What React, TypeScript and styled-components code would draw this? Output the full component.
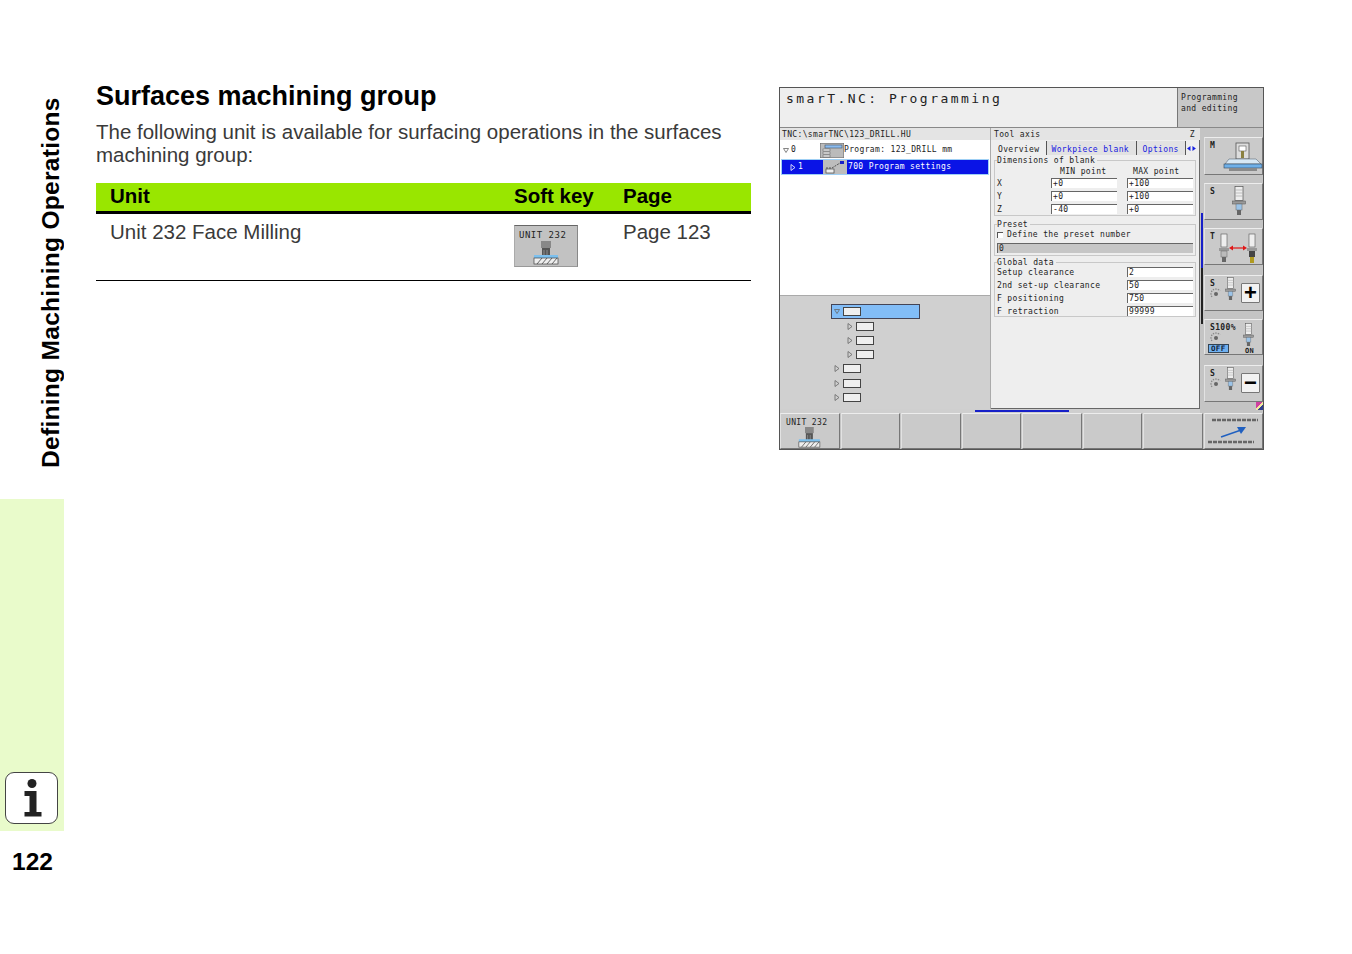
import React from "react";
import styled, { createGlobalStyle } from "styled-components";

const GlobalStyle = createGlobalStyle`
  html, body {
    margin: 0;
    padding: 0;
    background: #fff;
  }
`;

const Page = styled.div`
  display: flex;
  width: 1352px;
  height: 954px;
  overflow: hidden;
  background: #fff;
  font-family: "Liberation Sans", Arial, sans-serif;
  color: #000;
`;

const Side = styled.aside`
  display: flex;
  flex-direction: column;
  width: 64px;
  flex: none;
`;

const SideTitleWrap = styled.div`
  display: flex;
  justify-content: flex-end;
  height: 499px;
  box-sizing: border-box;
  padding: 92px 0 0;
`;

const SideTitle = styled.div`
  writing-mode: vertical-rl;
  transform: rotate(180deg);
  font-size: 24.5px;
  font-weight: 700;
  line-height: 28px;
  height: 376px;
  letter-spacing: 0.3px;
  text-align: left;
  white-space: nowrap;
  margin-right: -1px;
`;

const SideTab = styled.div`
  display: flex;
  align-items: flex-end;
  height: 332px;
  box-sizing: border-box;
  padding: 0 0 7px 5px;
  background: #e9fbcb;
`;

const InfoBadge = styled.div`
  display: flex;
  align-items: center;
  justify-content: center;
  width: 53px;
  height: 52px;
  box-sizing: border-box;
  border: 1px solid #444;
  border-radius: 9px;
  background: #fff;
`;

const PageNumber = styled.div`
  padding: 17px 0 0 12px;
  font-size: 24.5px;
  font-weight: 700;
  line-height: 28px;
`;

const Content = styled.main`
  width: 655px;
  flex: none;
  margin-left: 32px;
  padding-top: 79px;
`;

const Heading = styled.h1`
  margin: 0;
  font-size: 27px;
  font-weight: 700;
  line-height: 35px;
  white-space: nowrap;
`;

const Lead = styled.p`
  margin: 6px 0 0;
  width: 640px;
  font-size: 20.5px;
  line-height: 23px;
  color: #3a3a3a;
`;

const Table = styled.div`
  margin-top: 17px;
`;

const TableRow = styled.div<{ $head?: boolean }>`
  display: grid;
  grid-template-columns: 418px 109px 1fr;
  box-sizing: border-box;
  height: ${(p) => (p.$head ? "31px" : "67px")};
  padding: ${(p) => (p.$head ? "0" : "6px 0 0")};
  background: ${(p) => (p.$head ? "#99e600" : "transparent")};
  border-bottom: ${(p) => (p.$head ? "3px solid #000" : "1px solid #000")};
  font-size: 20.5px;
  font-weight: ${(p) => (p.$head ? 700 : 400)};
  line-height: ${(p) => (p.$head ? "26px" : "24px")};
  color: ${(p) => (p.$head ? "#000" : "#3a3a3a")};
`;

const Cell = styled.div<{ $first?: boolean }>`
  padding-left: ${(p) => (p.$first ? "14px" : "0")};
  white-space: nowrap;
`;

const KeyThumb = styled.div`
  display: flex;
  flex-direction: column;
  width: 64px;
  height: 42px;
  margin-top: 5px;
  box-sizing: border-box;
  padding: 5px 0 0 4px;
  background: #c2c2c2;
  border-top: 1px solid #666;
  border-right: 1px solid #888;
  border-bottom: 1px solid #999;
  border-left: 1px solid #aaa;
  font-family: "DejaVu Sans Mono", monospace;
  font-size: 9px;
  line-height: 9px;
  letter-spacing: 0.5px;
  color: #222;
  white-space: pre;
`;

const ThumbArt = styled.div`
  display: flex;
  justify-content: center;
  margin: 1px 4px 0 0;
`;

/* screenshot of the control */

const Screen = styled.section`
  display: grid;
  grid-template-columns: 211px 209px 63px;
  grid-template-rows: 40px 12px 269px 4px 1fr;
  position: relative;
  width: 485px;
  height: 363px;
  margin: 87px 0 0 28px;
  box-sizing: border-box;
  flex: none;
  border: 1px solid #555;
  background: #c4c4c4;
  font-family: "DejaVu Sans Mono", monospace;
  font-size: 8px;
  line-height: 10px;
  letter-spacing: 0.35px;
  color: #222;
  white-space: pre;
`;

const Header = styled.header`
  grid-column: 1 / -1;
  display: flex;
  border-bottom: 1px solid #888;
`;

const TitleBar = styled.div`
  width: 398px;
  flex: none;
  padding: 3px 0 0 6px;
  background: #eeeeee;
  border-right: 1px solid #777;
  box-sizing: border-box;
  font-size: 13px;
  line-height: 15px;
  letter-spacing: 2.47px;
`;

const ModeBox = styled.div`
  flex: 1;
  padding: 4px 0 0 3px;
  background: #c8c8c8;
  line-height: 11px;
`;

const PathBar = styled.div`
  padding: 2px 0 0 2px;
  background: #e4e4e4;
  border-right: 1px solid #aaa;
  box-sizing: border-box;
`;

const AxisBar = styled.div`
  display: flex;
  justify-content: space-between;
  padding: 2px 5px 0 3px;
  background: #e4e4e4;
  box-sizing: border-box;
`;

const RightRail = styled.div`
  grid-column: 3;
  grid-row: 2 / 5;
  display: flex;
  flex-direction: column;
  padding: 9px 0 0 4px;
`;

const LeftPane = styled.div`
  display: flex;
  flex-direction: column;
  border-right: 1px solid #aaa;
  box-sizing: border-box;
`;

const ProgramTree = styled.div`
  height: 156px;
  flex: none;
  padding-top: 2px;
  box-sizing: border-box;
  background: #fff;
  border-bottom: 1px solid #aaa;
`;

const ProgramRow = styled.div<{ $active?: boolean }>`
  display: grid;
  grid-template-columns: ${(p) => (p.$active ? "39px 25px 1fr" : "37px 24px 1fr")};
  align-items: center;
  height: 16px;
  margin: ${(p) => (p.$active ? "1px 1px 0 1px" : "0 0 0 1px")};
  padding-left: 2px;
  box-sizing: border-box;
  background: ${(p) => (p.$active ? "#0a14e6" : "transparent")};
  border: ${(p) => (p.$active ? "1px solid #9fd0f5" : "none")};
  color: ${(p) => (p.$active ? "#fff" : "#222")};
`;

const RowMarker = styled.span<{ $indent?: number }>`
  display: flex;
  align-items: center;
  gap: 2px;
  padding-left: ${(p) => p.$indent ?? 0}px;
`;

const RowIcon = styled.svg`
  display: block;
  flex: none;
`;

const UnitTree = styled.div`
  flex: 1;
  display: flex;
  flex-direction: column;
  padding: 8px 0 0 51px;
  background: #d0d0d0;
`;

const UnitRow = styled.div<{ $open?: boolean; $nested?: boolean }>`
  display: flex;
  align-items: center;
  gap: 3px;
  box-sizing: border-box;
  width: 89px;
  height: 15px;
  margin-bottom: ${(p) => (p.$open ? "0" : "-0.85px")};
  padding-left: ${(p) => (p.$nested ? "15px" : "2px")};
  background: ${(p) => (p.$open ? "#82bdf7" : "transparent")};
  border: ${(p) => (p.$open ? "1px solid #445" : "1px solid transparent")};
`;

const UnitBox = styled.span`
  width: 18px;
  height: 9px;
  box-sizing: border-box;
  background: #efefef;
  border: 1px solid #444;
`;

const FormPane = styled.div`
  padding: 1px 3px 0;
  background: #eeeeee;
  border-right: 1px solid #666;
  border-bottom: 1px solid #666;
  box-sizing: border-box;
`;

const Tabs = styled.div`
  display: flex;
  align-items: stretch;
  height: 14px;
  padding-left: 2px;
`;

const Tab = styled.div<{ $active?: boolean; $width: number; $pad: number }>`
  width: ${(p) => p.$width}px;
  box-sizing: border-box;
  padding: 4px 0 0 ${(p) => p.$pad}px;
  background: ${(p) => (p.$active ? "#eeeeee" : "#e2e2e2")};
  border-right: 1px solid #555;
  color: ${(p) => (p.$active ? "#222" : "#1720e0")};
`;

const TabArrows = styled.svg`
  margin: 5px 0 0 1px;
`;

const Group = styled.fieldset<{ $height: number; $gap: number }>`
  height: ${(p) => p.$height}px;
  margin: ${(p) => p.$gap}px 0 0;
  padding: 0 2px;
  box-sizing: border-box;
  border: 1px solid #c8c8c8;
  min-width: 0;
`;

const Legend = styled.legend`
  padding: 0 2px 0 0;
  line-height: 9px;
`;

const PointHead = styled.div`
  display: grid;
  grid-template-columns: 63px 73px 1fr;
  height: 13px;
  line-height: 13px;
`;

const FieldRow = styled.div<{ $wide?: boolean }>`
  display: grid;
  grid-template-columns: ${(p) => (p.$wide ? "130px 66px" : "44px 66px 66px")};
  column-gap: ${(p) => (p.$wide ? "0" : "10px")};
  align-items: start;
  height: 13px;
`;

const FieldLabel = styled.span`
  padding-top: 1px;
`;

const Field = styled.div`
  height: 10px;
  padding-left: 1px;
  box-sizing: border-box;
  background: #fff;
  border-top: 1px solid #666;
  border-left: 1px solid #666;
  line-height: 9px;
`;

const CheckRow = styled.div`
  display: flex;
  align-items: center;
  gap: 4px;
  height: 11px;
`;

const CheckBox = styled.span`
  width: 6px;
  height: 6px;
  box-sizing: border-box;
  background: #fff;
  border-top: 1px solid #555;
  border-left: 1px solid #555;
`;

const GreyField = styled.div`
  height: 10px;
  margin-top: 3px;
  padding-left: 1px;
  box-sizing: border-box;
  background: #c6c6c6;
  border-top: 1px solid #666;
  border-left: 1px solid #666;
  line-height: 9px;
`;

const Divider = styled.div`
  grid-column: 1 / 3;
  background: #cfcfcf;
`;

const BottomKeys = styled.div`
  grid-column: 1 / -1;
  display: grid;
  grid-template-columns: repeat(8, 1fr);
  column-gap: 1px;
`;

const SoftKey = styled.div`
  display: flex;
  box-sizing: border-box;
  background: #cacaca;
  border-top: 1px solid #ededed;
  border-left: 1px solid #e2e2e2;
  border-right: 1px solid #777;
  border-bottom: 1px solid #777;
`;

const RailKey = styled(SoftKey)<{ $height: number; $below: number }>`
  width: 59px;
  height: ${(p) => p.$height}px;
  flex: none;
  margin-bottom: ${(p) => p.$below}px;
  padding: 1px 2px 0 5px;
`;

const KeyColumn = styled.div<{ $width: number }>`
  display: flex;
  flex-direction: column;
  align-items: flex-start;
  flex: none;
  width: ${(p) => p.$width}px;
  padding-top: 2px;
  box-sizing: border-box;
`;

const KeyArt = styled.div<{ $top: number }>`
  flex: none;
  padding-top: ${(p) => p.$top}px;
  line-height: 0;
`;

const KeyLetter = styled.span`
  font-weight: 700;
  font-size: 8px;
  line-height: 9px;
`;

const BottomKeyLabel = styled.div`
  display: flex;
  flex-direction: column;
  align-items: center;
  width: 100%;
  padding: 4px 0 0;
  line-height: 9px;
`;

const BottomKeyText = styled.span`
  align-self: flex-start;
  padding-left: 5px;
`;

const CenteredArt = styled.div`
  display: flex;
  align-items: center;
  justify-content: center;
  width: 100%;
`;

const SignBox = styled.span`
  display: flex;
  align-items: center;
  justify-content: center;
  width: 19px;
  height: 20px;
  margin: 6px 0 0 auto;
  box-sizing: border-box;
  background: #f2f2f2;
  border: 1px solid #777;
  border-radius: 1px;
  font-family: "Liberation Sans", sans-serif;
  font-size: 22px;
  font-weight: 700;
  color: #000;
`;

const OffChip = styled.span`
  margin: 1px 0 0 -2px;
  padding: 0 2px;
  background: #6fb0f0;
  border: 1px solid #345;
  font-size: 7.5px;
  line-height: 7px;
  font-weight: 700;
  color: #123;
`;

const OnLabel = styled.span`
  margin: 1px 0 0 2px;
  font-size: 7px;
  line-height: 7px;
  font-weight: 700;
`;

const ScrollMark = styled.div`
  position: absolute;
  left: 421px;
  top: 125px;
  width: 2px;
  height: 111px;
  background: linear-gradient(#1720c8 0 50%, #222 50%);
`;

const ProgressMark = styled.div`
  position: absolute;
  left: 195px;
  top: 322px;
  width: 94px;
  height: 2px;
  background: #1720c8;
`;

const CornerMark = styled.div`
  position: absolute;
  right: 0;
  top: 314px;
  width: 7px;
  height: 8px;
  background: linear-gradient(135deg, #d040a0 0 45%, #f2e8a0 45% 60%, #304090 60%);
`;

const Triangle = ({ down, color = "#666" }: { down?: boolean; color?: string }) => (
  <RowIcon width="6" height="7" viewBox="0 0 6 7">
    {down ? (
      <path d="M0.5 1.5h5L3 5.5z" fill="none" stroke={color} strokeWidth="0.8" />
    ) : (
      <path d="M1 0.5v6L5 3.5z" fill="none" stroke={color} strokeWidth="0.8" />
    )}
  </RowIcon>
);

const ProgramIcon = () => (
  <RowIcon width="24" height="15" viewBox="0 0 24 15">
    <rect width="24" height="15" fill="#bbb" stroke="#666" />
    <rect x="5" y="2" width="17" height="3" fill="#8cbcf0" stroke="#456" strokeWidth="0.6" />
    <rect x="3" y="6" width="7" height="2" fill="#eee" stroke="#555" strokeWidth="0.5" />
    <rect x="3" y="9" width="7" height="2" fill="#eee" stroke="#555" strokeWidth="0.5" />
    <rect x="3" y="12" width="7" height="2" fill="#eee" stroke="#555" strokeWidth="0.5" />
  </RowIcon>
);

const SettingsIcon = () => (
  <RowIcon width="24" height="14" viewBox="0 0 24 14">
    <rect width="24" height="14" fill="#bdbdbd" />
    <path d="M3 8h6l8-5" fill="none" stroke="#555" strokeWidth="1" strokeDasharray="2 1" />
    <rect x="17" y="1" width="4" height="3" fill="#1720c8" />
    <rect x="3" y="9" width="8" height="4" fill="#eee" stroke="#444" strokeWidth="0.7" />
  </RowIcon>
);

const Spindle = ({ width = 14, height = 30 }: { width?: number; height?: number }) => (
  <svg width={width} height={height} viewBox="0 0 14 30" style={{ flex: "none" }}>
    <rect x="3" y="0.5" width="8" height="14" fill="#eee" stroke="#555" strokeWidth="0.7" />
    <path d="M3 4h8M3 7h8M3 10h8" stroke="#aaa" strokeWidth="0.7" />
    <rect x="0.5" y="15" width="13" height="3" fill="#999" stroke="#555" strokeWidth="0.5" />
    <rect x="4" y="18" width="6" height="6" fill="#9cc4e8" stroke="#666" strokeWidth="0.5" />
    <rect x="5" y="24" width="4" height="5" fill="#666" />
  </svg>
);

const Dial = () => (
  <svg width="12" height="11" viewBox="0 0 12 11">
    <path d="M2 9A5 5 0 1 1 10 3" fill="none" stroke="#888" strokeWidth="1.2" strokeDasharray="1.5 1" />
    <circle cx="6" cy="6" r="2" fill="#666" />
  </svg>
);

const FaceMill = ({ height = 24 }: { height?: number }) => (
  <svg width={(26 * height) / 24} height={height} viewBox="0 0 26 24">
    <rect x="8" y="0" width="10" height="7" fill="#888" />
    <rect x="9" y="7" width="8" height="8" fill="#555" />
    <path d="M11 9v6M14 9v6" stroke="#999" strokeWidth="0.8" />
    <rect x="1" y="14" width="24" height="3" fill="#7cc0ee" />
    <rect x="1" y="17" width="24" height="6" fill="#eee" stroke="#444" strokeWidth="0.7" />
    <path d="M4 23l5-6M9 23l5-6M14 23l5-6M19 23l5-6" stroke="#444" strokeWidth="0.8" />
  </svg>
);

const ChainArrow = () => (
  <svg width="54" height="30" viewBox="0 0 54 30">
    <path d="M6 4h46" stroke="#666" strokeWidth="2.5" strokeDasharray="4 1" />
    <path d="M2 26h46" stroke="#666" strokeWidth="2.5" strokeDasharray="4 1" />
    <path d="M15 21L38 13" stroke="#2060c0" strokeWidth="1.4" />
    <path d="M31 11l9 0-5 7z" fill="#2060c0" />
  </svg>
);

const SwapTools = () => (
  <svg width="40" height="32" viewBox="0 0 40 32">
    <g transform="translate(0 1)">
      <rect x="2" y="1" width="6" height="13" fill="#eee" stroke="#555" strokeWidth="0.6" />
      <rect x="0" y="15" width="10" height="3" fill="#999" />
      <rect x="2" y="18" width="6" height="6" fill="#bbb" stroke="#666" strokeWidth="0.5" />
      <rect x="3" y="24" width="4" height="5" fill="#666" />
    </g>
    <g transform="translate(28 1)">
      <rect x="2" y="1" width="6" height="13" fill="#eee" stroke="#555" strokeWidth="0.6" />
      <rect x="0" y="15" width="10" height="3" fill="#999" />
      <rect x="2" y="18" width="6" height="6" fill="#444" />
      <rect x="3" y="24" width="4" height="6" fill="#b09a20" />
    </g>
    <path d="M12 16h14" stroke="#e01818" strokeWidth="1.2" />
    <path d="M10 16l4-2.5v5zM28 16l-4-2.5v5z" fill="#e01818" />
  </svg>
);

const MachineTable = () => (
  <svg width="40" height="31" viewBox="0 0 40 31">
    <rect x="13" y="1" width="13" height="16" fill="#ddd" stroke="#555" strokeWidth="0.8" />
    <rect x="16" y="4" width="7" height="5" fill="#fff" stroke="#555" strokeWidth="0.6" />
    <rect x="18" y="9" width="3" height="7" fill="#8a8040" />
    <path d="M6 17h27l5 5H2z" fill="#d8e8f4" stroke="#456" strokeWidth="0.5" />
    <rect x="1" y="22" width="38" height="4" fill="#6fb0e8" stroke="#345" strokeWidth="0.6" />
    <path d="M6 26h28v3H6z" fill="#8a8a8a" />
  </svg>
);

const InfoGlyph = () => (
  <svg width="22" height="38" viewBox="0 0 22 38">
    <circle cx="11" cy="4.5" r="4.5" fill="#222" />
    <path d="M3.5 12h12v21h5v4.5H3.5V33h5V17h-5z" fill="#222" />
  </svg>
);

const unitRows = [
  { open: true, nested: false },
  { nested: true },
  { nested: true },
  { nested: true },
  {},
  {},
  {},
];

const App = () => {
  return (
    <Page>
      <GlobalStyle />
      <Side>
        <SideTitleWrap>
          <SideTitle>Defining Machining Operations</SideTitle>
        </SideTitleWrap>
        <SideTab>
          <InfoBadge>
            <InfoGlyph />
          </InfoBadge>
        </SideTab>
        <PageNumber>122</PageNumber>
      </Side>

      <Content>
        <Heading>Surfaces machining group</Heading>
        <Lead>
          The following unit is available for surfacing operations in the surfaces machining group:
        </Lead>
        <Table>
          <TableRow $head>
            <Cell $first>Unit</Cell>
            <Cell>Soft key</Cell>
            <Cell>Page</Cell>
          </TableRow>
          <TableRow>
            <Cell $first>Unit 232 Face Milling</Cell>
            <Cell>
              <KeyThumb>
                UNIT 232
                <ThumbArt>
                  <FaceMill />
                </ThumbArt>
              </KeyThumb>
            </Cell>
            <Cell>Page 123</Cell>
          </TableRow>
        </Table>
      </Content>

      <Screen>
        <Header>
          <TitleBar>smarT.NC: Programming</TitleBar>
          <ModeBox>{"Programming\nand editing"}</ModeBox>
        </Header>

        <PathBar>TNC:\smarTNC\123_DRILL.HU</PathBar>
        <AxisBar>
          <span>Tool axis</span>
          <span>Z</span>
        </AxisBar>

        <RightRail>
          <RailKey $height={38} $below={8}>
            <KeyColumn $width={13}>
              <KeyLetter>M</KeyLetter>
            </KeyColumn>
            <KeyArt $top={3}>
              <MachineTable />
            </KeyArt>
          </RailKey>
          <RailKey $height={37} $below={8}>
            <KeyColumn $width={22}>
              <KeyLetter>S</KeyLetter>
            </KeyColumn>
            <KeyArt $top={1}>
              <Spindle />
            </KeyArt>
          </RailKey>
          <RailKey $height={37} $below={10}>
            <KeyColumn $width={9}>
              <KeyLetter>T</KeyLetter>
            </KeyColumn>
            <KeyArt $top={2}>
              <SwapTools />
            </KeyArt>
          </RailKey>
          <RailKey $height={36} $below={8}>
            <KeyColumn $width={15}>
              <KeyLetter>S</KeyLetter>
              <Dial />
            </KeyColumn>
            <KeyArt $top={0}>
              <Spindle width={11} height={24} />
            </KeyArt>
            <SignBox>+</SignBox>
          </RailKey>
          <RailKey $height={36} $below={10}>
            <KeyColumn $width={33}>
              <KeyLetter>S100%</KeyLetter>
              <Dial />
              <OffChip>OFF</OffChip>
            </KeyColumn>
            <KeyColumn $width={14}>
              <Spindle width={11} height={24} />
              <OnLabel>ON</OnLabel>
            </KeyColumn>
          </RailKey>
          <RailKey $height={37} $below={0}>
            <KeyColumn $width={15}>
              <KeyLetter>S</KeyLetter>
              <Dial />
            </KeyColumn>
            <KeyArt $top={0}>
              <Spindle width={11} height={24} />
            </KeyArt>
            <SignBox>−</SignBox>
          </RailKey>
        </RightRail>

        <LeftPane>
          <ProgramTree>
            <ProgramRow>
              <RowMarker>
                <Triangle down />
                0
              </RowMarker>
              <ProgramIcon />
              <span>Program: 123_DRILL mm</span>
            </ProgramRow>
            <ProgramRow $active>
              <RowMarker $indent={6}>
                <Triangle color="#fff" />
                1
              </RowMarker>
              <SettingsIcon />
              <span>700 Program settings</span>
            </ProgramRow>
          </ProgramTree>
          <UnitTree>
            {unitRows.map((row, i) => (
              <UnitRow key={i} $open={row.open} $nested={row.nested}>
                <Triangle down={row.open} />
                <UnitBox />
              </UnitRow>
            ))}
          </UnitTree>
        </LeftPane>

        <FormPane>
          <Tabs>
            <Tab $active $width={52} $pad={2}>Overview</Tab>
            <Tab $width={90} $pad={4}>Workpiece blank</Tab>
            <Tab $width={50} $pad={6}>Options</Tab>
            <TabArrows width="9" height="5" viewBox="0 0 9 5">
              <path d="M0 2.5L3.5 0v5zM9 2.5L5.5 0v5z" fill="#1720e0" />
            </TabArrows>
          </Tabs>
          <Group $height={60} $gap={1}>
            <Legend>Dimensions of blank</Legend>
            <PointHead>
              <span />
              <span>MIN point</span>
              <span>MAX point</span>
            </PointHead>
            <FieldRow>
              <FieldLabel>X</FieldLabel>
              <Field>+0</Field>
              <Field>+100</Field>
            </FieldRow>
            <FieldRow>
              <FieldLabel>Y</FieldLabel>
              <Field>+0</Field>
              <Field>+100</Field>
            </FieldRow>
            <FieldRow>
              <FieldLabel>Z</FieldLabel>
              <Field>-40</Field>
              <Field>+0</Field>
            </FieldRow>
          </Group>
          <Group $height={36} $gap={4}>
            <Legend>Preset</Legend>
            <CheckRow>
              <CheckBox />
              <span>Define the preset number</span>
            </CheckRow>
            <GreyField>0</GreyField>
          </Group>
          <Group $height={59} $gap={2}>
            <Legend>Global data</Legend>
            <FieldRow $wide>
              <FieldLabel>Setup clearance</FieldLabel>
              <Field>2</Field>
            </FieldRow>
            <FieldRow $wide>
              <FieldLabel>2nd set-up clearance</FieldLabel>
              <Field>50</Field>
            </FieldRow>
            <FieldRow $wide>
              <FieldLabel>F positioning</FieldLabel>
              <Field>750</Field>
            </FieldRow>
            <FieldRow $wide>
              <FieldLabel>F retraction</FieldLabel>
              <Field>99999</Field>
            </FieldRow>
          </Group>
        </FormPane>

        <Divider />

        <BottomKeys>
          <SoftKey>
            <BottomKeyLabel>
              <BottomKeyText>UNIT 232</BottomKeyText>
              <FaceMill height={21} />
            </BottomKeyLabel>
          </SoftKey>
          <SoftKey />
          <SoftKey />
          <SoftKey />
          <SoftKey />
          <SoftKey />
          <SoftKey />
          <SoftKey>
            <CenteredArt>
              <ChainArrow />
            </CenteredArt>
          </SoftKey>
        </BottomKeys>

        <ScrollMark />
        <ProgressMark />
        <CornerMark />
      </Screen>
    </Page>
  );
};

export default App;
